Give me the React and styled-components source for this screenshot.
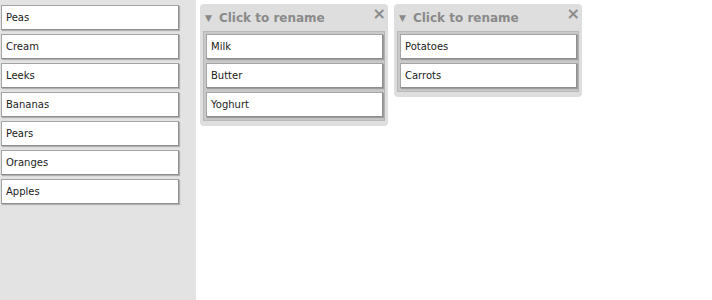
import React from 'react';
import styled, { createGlobalStyle } from 'styled-components';

const GlobalStyle = createGlobalStyle`
  html, body {
    margin: 0;
    padding: 0;
    background: #fff;
    font-family: "DejaVu Sans", Verdana, sans-serif;
  }
`;

const Page = styled.div`
  display: flex;
  align-items: stretch;
  min-height: 300px;
`;

const Sidebar = styled.div`
  width: 196px;
  background: #e3e3e3;
  padding: 5px 0 0 1px;
  box-sizing: border-box;
  display: flex;
  flex-direction: column;
  gap: 4px;
`;

const Item = styled.div`
  box-sizing: border-box;
  width: ${(p) => p.width || 178}px;
  height: 25px;
  background: #fff;
  border: 1px solid #a4a4a4;
  border-right-color: #8e8e8e;
  border-bottom-color: #8e8e8e;
  box-shadow: 1px 1px 1px rgba(0, 0, 0, 0.22);
  padding: 0 4px;
  display: flex;
  align-items: center;
  font-size: 10px;
  color: #222;
`;

const Board = styled.div`
  display: flex;
  align-items: flex-start;
  gap: 6px;
  padding: 4px 0 0 4px;
`;

const Group = styled.div`
  width: 188px;
  box-sizing: border-box;
  background: #dedede;
  border-radius: 4px;
  padding: 0 3px 5px 3px;
`;

const Header = styled.div`
  position: relative;
  height: 27px;
  display: flex;
  align-items: center;
  padding: 1px 0 0 2px;
  box-sizing: border-box;
  color: #8a8a8a;
  font-weight: bold;
  font-size: 12px;
`;

const Arrow = styled.span`
  font-size: 9px;
  margin-right: 7px;
  color: #888;
`;

const Close = styled.span`
  position: absolute;
  right: -1px;
  top: 0;
  font-size: 16px;
  font-weight: bold;
  color: #8a8a8a;
`;

const Inner = styled.div`
  background: #c9c9c9;
  border: 1px solid #b8b8b8;
  padding: 2px 1px 3px 2px;
  display: flex;
  flex-direction: column;
  gap: 4px;
`;

const sidebarItems = ['Peas', 'Cream', 'Leeks', 'Bananas', 'Pears', 'Oranges', 'Apples'];

const groups = [
  ['Milk', 'Butter', 'Yoghurt'],
  ['Potatoes', 'Carrots'],
];

export default function App() {
  return (
    <Page>
      <GlobalStyle />
      <Sidebar>
        {sidebarItems.map((name) => (
          <Item key={name}>{name}</Item>
        ))}
      </Sidebar>
      <Board>
        {groups.map((items, i) => (
          <Group key={i}>
            <Header>
              <Arrow>▼</Arrow>
              Click to rename
              <Close>×</Close>
            </Header>
            <Inner>
              {items.map((name) => (
                <Item key={name} width={177}>{name}</Item>
              ))}
            </Inner>
          </Group>
        ))}
      </Board>
    </Page>
  );
}
